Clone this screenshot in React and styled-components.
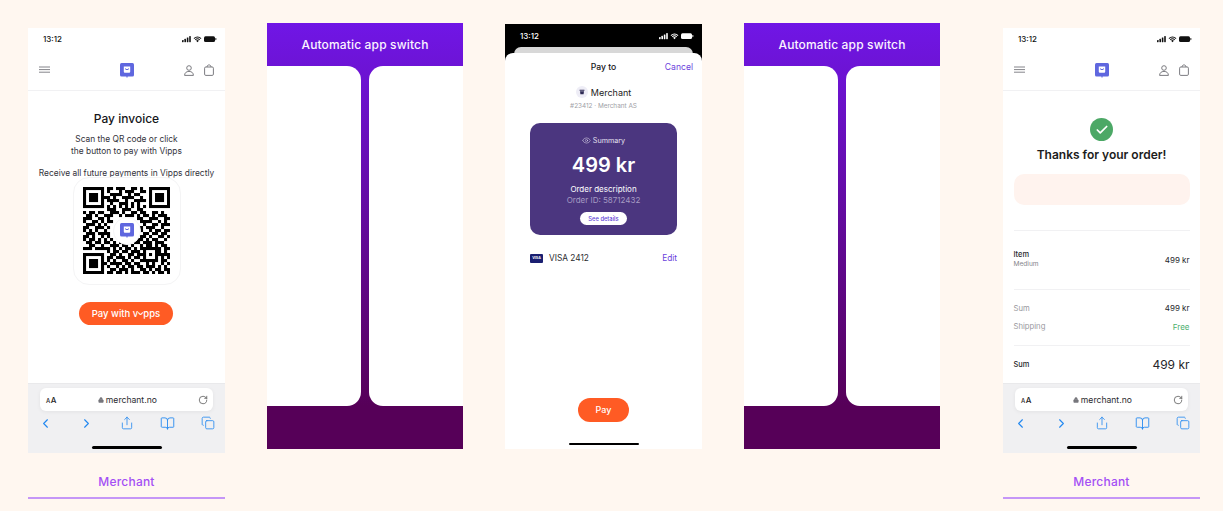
import React from 'react';
import styled, { createGlobalStyle } from 'styled-components';
import { ChevronLeft, ChevronRight, Share, BookOpen, Copy, RotateCw, Lock, Eye, Check } from 'lucide-react';

const GlobalStyle = createGlobalStyle`
  html, body {
    margin: 0;
    background: #fff7f0;
    font-family: "Inter", "Liberation Sans", sans-serif;
    -webkit-font-smoothing: antialiased;
  }
  * { box-sizing: border-box; }
`;

const Page = styled.div`
  display: flex;
  width: 1223px;
  height: 511px;
  overflow: hidden;
  padding-left: 28px;
`;

const Column = styled.div`
  width: ${p => p.$width || 197}px;
  margin-left: ${p => p.$gap || 0}px;
  padding-top: ${p => p.$top}px;
  display: flex;
  flex-direction: column;
  flex: none;
`;

const Caption = styled.div`
  margin-top: 19px;
  height: 27px;
  border-bottom: 2px solid #c596f7;
  text-align: center;
  color: #a44ff5;
  font-size: 12px;
  font-weight: 500;
  line-height: 20px;
  letter-spacing: 0.2px;
`;

const Phone = styled.div`
  width: 197px;
  height: 425px;
  background: ${p => (p.$dark ? '#000' : '#fff')};
  display: flex;
  flex-direction: column;
  position: relative;
  overflow: hidden;
`;

const StatusBar = styled.div`
  height: 22px;
  flex: none;
  display: flex;
  align-items: center;
  justify-content: space-between;
  padding: ${p => (p.$dark ? '2px' : '0')} 8px 0 15px;
  color: ${p => (p.$dark ? '#fff' : '#111')};
  font-size: 8px;
  font-weight: 500;
`;

const NavBar = styled.div`
  height: 41px;
  flex: none;
  display: flex;
  align-items: center;
  justify-content: space-between;
  padding: 0 11px;
  border-bottom: 1px solid #f1f1f3;
`;

const NavSide = styled.div`
  width: 34px;
  display: flex;
  align-items: center;
  justify-content: ${p => (p.$right ? 'flex-end' : 'flex-start')};
  gap: 10px;
`;

const Content = styled.div`
  flex: 1;
  display: flex;
  flex-direction: column;
  align-items: center;
`;

const InvoiceTitle = styled.h1`
  margin: 20px 0 0;
  font-size: 12px;
  line-height: 15px;
  font-weight: 500;
  color: #16161a;
`;

const Para = styled.p`
  margin: ${p => p.$top || 0}px 0 0;
  font-size: 8.4px;
  line-height: 11.5px;
  color: #33333b;
  text-align: center;
  white-space: nowrap;
`;

const QrCard = styled.div`
  margin-top: -3px;
  width: 108px;
  height: 108px;
  flex: none;
  border: 1px solid #f4f4f5;
  border-radius: 16px;
  display: flex;
  align-items: center;
  justify-content: center;
  position: relative;
`;

const QrBadge = styled.div`
  position: absolute;
  left: 50%;
  top: 50%;
  width: 28px;
  height: 28px;
  margin: -14px 0 0 -14px;
  border-radius: 50%;
  background: #fff;
  border: 1px solid #f5f5f7;
  display: flex;
  align-items: center;
  justify-content: center;
`;

const OrangeButton = styled.button`
  margin: ${p => p.$top}px ${p => p.$nudge || 0}px 0 0;
  width: ${p => p.$width}px;
  height: ${p => p.$height}px;
  border: none;
  border-radius: 12px;
  background: #ff5b24;
  color: #fff;
  font-family: inherit;
  font-size: ${p => p.$size}px;
  font-weight: 500;
  display: flex;
  align-items: center;
  justify-content: center;
  padding: 0;
  flex: none;
`;

const Browser = styled.div`
  height: 70px;
  flex: none;
  background: #f0f0f2;
  border-top: 1px solid #e9e9eb;
  padding: 4px 10px 0;
  display: flex;
  flex-direction: column;
  align-items: center;
`;

const UrlBar = styled.div`
  width: 173px;
  height: 23px;
  flex: none;
  background: #fff;
  border-radius: 6px;
  box-shadow: 0 1px 4px rgba(0, 0, 0, 0.06);
  display: flex;
  align-items: center;
  justify-content: space-between;
  padding: 0 5px 0 6px;
  color: #222;
`;

const AaLabel = styled.span`
  font-size: 8px;
  font-weight: 500;
  letter-spacing: 0.4px;
  & > small { font-size: 6px; }
`;

const UrlText = styled.span`
  display: flex;
  align-items: center;
  gap: 2px;
  font-size: 8.6px;
  color: #2a2a2e;
`;

const ToolBar = styled.div`
  width: 100%;
  flex: none;
  margin-top: 4px;
  height: 16px;
  display: flex;
  justify-content: space-between;
  align-items: center;
  color: #2288f0;
`;

const HomeBar = styled.div`
  width: 70px;
  height: 2.5px;
  flex: none;
  margin-top: ${p => p.$top}px;
  border-radius: 2px;
  background: #000;
  align-self: center;
`;

/* switch panels */
const SwitchPanel = styled.div`
  width: 196px;
  height: 426px;
  display: flex;
  flex-direction: column;
  background: linear-gradient(180deg, #7016e6 0%, #560058 90%, #560058 100%);
`;

const SwitchHeader = styled.div`
  height: 43px;
  flex: none;
  display: flex;
  align-items: center;
  justify-content: center;
  color: #fbf5ff;
  font-size: 12px;
  font-weight: 500;
  letter-spacing: 0.15px;
`;

const SwitchCards = styled.div`
  height: 340px;
  flex: none;
  display: flex;
  gap: 8px;
`;

const SwitchCard = styled.div`
  flex: 1;
  background: #fff;
  border-radius: ${p => (p.$side === 'left' ? '0 14px 14px 0' : '14px 0 0 14px')};
`;

/* pay sheet */
const SheetStack = styled.div`
  flex: 1;
  display: flex;
  flex-direction: column;
  position: relative;
  padding-top: 7px;
`;

const SheetBehind = styled.div`
  position: absolute;
  top: 1px;
  left: 9px;
  right: 9px;
  height: 20px;
  border-radius: 7px 7px 0 0;
  background: #d8d8d8;
`;

const Sheet = styled.div`
  flex: 1;
  position: relative;
  background: #fff;
  border-radius: 8px 8px 0 0;
  display: flex;
  flex-direction: column;
  align-items: center;
  padding: 0 9px 4px;
`;

const SheetHead = styled.div`
  width: 100%;
  height: 28px;
  flex: none;
  display: grid;
  grid-template-columns: 1fr auto 1fr;
  align-items: center;
  font-size: 8.6px;
`;

const SheetTitle = styled.span`
  grid-column: 2;
  font-weight: 500;
  color: #16161a;
`;

const LinkText = styled.span`
  justify-self: end;
  color: #6a3fdc;
  font-size: ${p => p.$size || 8.6}px;
`;

const MerchantRow = styled.div`
  margin-top: 5px;
  display: flex;
  align-items: center;
  gap: 3px;
  font-size: 9px;
  color: #222;
`;

const MerchantAvatar = styled.span`
  width: 12px;
  height: 12px;
  border-radius: 50%;
  background: #eeedf6;
  display: flex;
  align-items: center;
  justify-content: center;
`;

const MerchantSub = styled.div`
  margin-top: 4px;
  font-size: 6.4px;
  line-height: 8px;
  color: #a0a0a6;
`;

const SummaryCard = styled.div`
  margin-top: 13px;
  width: 147px;
  height: 112px;
  flex: none;
  border-radius: 10px;
  background: #4b367f;
  color: #fff;
  display: flex;
  flex-direction: column;
  align-items: center;
`;

const SummaryLabel = styled.div`
  margin-top: 13px;
  display: flex;
  align-items: center;
  gap: 2px;
  font-size: 7.2px;
  color: #e6e2f0;
`;

const SummaryAmount = styled.div`
  margin-top: 7px;
  font-size: 20px;
  line-height: 26px;
  font-weight: 600;
`;

const SummaryDesc = styled.div`
  margin-top: 6px;
  font-size: 8px;
  line-height: 11px;
`;

const SummaryOrder = styled.div`
  font-size: 8px;
  line-height: 11px;
  color: #a69bc3;
`;

const DetailsPill = styled.span`
  margin-top: 6px;
  width: 47px;
  height: 13px;
  border-radius: 7px;
  background: #fff;
  color: #5f3fd6;
  font-size: 5.8px;
  font-weight: 500;
  display: flex;
  align-items: center;
  justify-content: center;
`;

const CardRow = styled.div`
  margin-top: 18px;
  width: 147px;
  display: flex;
  align-items: center;
  justify-content: space-between;
  font-size: 8.3px;
  color: #2a2a2e;
`;

const CardName = styled.span`
  display: flex;
  align-items: center;
  gap: 6px;
`;

const VisaChip = styled.span`
  width: 13px;
  height: 9px;
  border-radius: 1px;
  background: #1a1f71;
  color: #fff;
  font-size: 3.6px;
  font-weight: 700;
  display: flex;
  align-items: center;
  justify-content: center;
`;

const Spacer = styled.div`
  flex: 1;
`;

/* receipt */
const CheckCircle = styled.div`
  margin-top: 27px;
  width: 23px;
  height: 23px;
  flex: none;
  border-radius: 50%;
  background: #4ca866;
  display: flex;
  align-items: center;
  justify-content: center;
`;

const ThanksTitle = styled.h2`
  margin: 6px 0 0;
  font-size: 12px;
  line-height: 16px;
  font-weight: 600;
  color: #1c1c20;
`;

const PinkBox = styled.div`
  margin-top: 11px;
  width: 176px;
  height: 31px;
  flex: none;
  border-radius: 10px;
  background: #fff3ee;
`;

const ReceiptRow = styled.div`
  width: 176px;
  height: ${p => p.$height}px;
  flex: none;
  margin-top: ${p => p.$top || 0}px;
  padding-top: ${p => p.$pad || 0}px;
  display: flex;
  align-items: center;
  justify-content: space-between;
  border-top: ${p => (p.$line ? '1px solid #f1f1f3' : 'none')};
`;

const ItemName = styled.div`
  font-size: 7.4px;
  line-height: 9.5px;
  color: #26262a;
  font-weight: 500;
  margin-top: -1px;
  & > small {
    display: block;
    font-size: 6.6px;
    line-height: 9px;
    color: #85858b;
    font-weight: 400;
  }
`;

const RowLabel = styled.span`
  font-size: ${p => p.$size || 7.7}px;
  font-weight: ${p => p.$weight || 400};
  color: ${p => p.$color || '#9a9aa0'};
`;

const RowValue = styled.span`
  font-size: ${p => p.$size || 8}px;
  font-weight: ${p => p.$weight || 400};
  color: ${p => p.$color || '#26262a'};
`;

const QR_ROWS = [
  '11111110110111001101001111111',
  '10000010100010111001101000001',
  '10111010011110010110001011101',
  '10111011101001111001001011101',
  '10111010111100100111101011101',
  '10000010010011101010001000001',
  '11111110101010101010101111111',
  '00000000111001110011000000000',
  '10110110011101001101100110100',
  '01101001110010111010110101110',
  '11100110100000000011001110011',
  '10011010110000000001111001010',
  '01110101000000000000100110111',
  '11001110100000000001011100100',
  '10101001000000000001001011011',
  '01110111100000000000110110110',
  '11010010100000000001101001101',
  '10110101010000000011010110010',
  '01101101101011010110111011100',
  '00110010011101101001011010110',
  '11101111101010110101111111011',
  '00000000101101101110100011010',
  '11111110011010011011101011111',
  '10000010110111010110100010101',
  '10111010101001101001111110110',
  '10111011011110110110010100101',
  '10111010100101011011011101010',
  '10000010011011101001101011011',
  '11111110110110101110110101101',
];

const QrCode = () => (
  <svg width="87" height="87" viewBox="0 0 29 29" fill="#000">
    {QR_ROWS.map((row, y) =>
      row.split('').map((c, x) => (c === '1' ? <rect key={x + '-' + y} x={x} y={y} width="1.02" height="1.02" /> : null))
    )}
  </svg>
);

const Logo = ({ size = 14 }) => (
  <svg width={size} height={size + 1} viewBox="0 0 14 15">
    <rect width="14" height="13.5" rx="1.5" fill="#5f67df" />
    <path d="M6 13.3h2L7 15z" fill="#5f67df" />
    <path d="M3.8 3.6h6.4v5.2q0 1-1 1H4.8q-1 0-1-1z" fill="#fff" />
    <path d="M5.3 6q1.7 1.8 3.4 0" fill="none" stroke="#5f67df" strokeWidth="1" strokeLinecap="round" />
  </svg>
);

const StatusIcons = ({ color }) => (
  <svg width="35" height="8" viewBox="0 0 35 8" fill={color}>
    <rect x="0" y="5" width="1.6" height="2.2" rx=".4" />
    <rect x="2.4" y="3.8" width="1.6" height="3.4" rx=".4" />
    <rect x="4.8" y="2.4" width="1.6" height="4.8" rx=".4" />
    <rect x="7.2" y="1" width="1.6" height="6.2" rx=".4" />
    <path d="M15.5 7.2l-1.4-1.5a2 2 0 0 1 2.8 0zM12.9 4.5a3.7 3.7 0 0 1 5.2 0l-.7.7a2.8 2.8 0 0 0-3.8 0zM11.6 3.2a5.6 5.6 0 0 1 7.8 0l-.7.7a4.6 4.6 0 0 0-6.4 0z" />
    <rect x="22" y="1.2" width="11" height="5.8" rx="1.5" />
    <rect x="33.4" y="3" width=".9" height="2.2" rx=".4" />
  </svg>
);

const MenuIcon = () => (
  <svg width="11" height="8" viewBox="0 0 11 8" stroke="#77777d" strokeWidth="0.9">
    <path d="M0 1h11M0 3.6h11M0 6.2h11" />
  </svg>
);

const UserIcon = () => (
  <svg width="10" height="11" viewBox="0 0 10 11" fill="none" stroke="#6d6d73" strokeWidth="0.9">
    <circle cx="5" cy="3" r="2.3" />
    <path d="M.6 10.4h8.8c0-2.4-1.6-4-4.4-4s-4.4 1.6-4.4 4z" />
  </svg>
);

const BagIcon = () => (
  <svg width="10" height="12" viewBox="0 0 10 12" fill="none" stroke="#6d6d73" strokeWidth="0.9">
    <rect x=".6" y="3" width="8.8" height="8.4" rx="1.2" />
    <path d="M3 3c0-2.8 4-2.8 4 0" />
  </svg>
);

const Smile = () => (
  <svg width="5" height="8" viewBox="0 0 5 8" fill="none" stroke="#fff" strokeWidth="1.2" strokeLinecap="round">
    <path d="M.6 3.8q1.9 3.2 3.8 0" />
  </svg>
);

const CupIcon = () => (
  <svg width="6" height="6" viewBox="0 0 6 6" fill="#2f2b55">
    <path d="M.6.8h4.8v.9H.6zM1 2.3h4l-.4 2.9H1.4z" />
  </svg>
);

const NavRow = () => (
  <NavBar>
    <NavSide><MenuIcon /></NavSide>
    <Logo />
    <NavSide $right><UserIcon /><BagIcon /></NavSide>
  </NavBar>
);

const SafariBar = () => (
  <Browser>
    <UrlBar>
      <AaLabel><small>A</small>A</AaLabel>
      <UrlText><Lock size={6} fill="#77777d" color="#77777d" />merchant.no</UrlText>
      <RotateCw size={10} strokeWidth={1.4} color="#222" />
    </UrlBar>
    <ToolBar>
      <ChevronLeft size={15} strokeWidth={1.8} />
      <ChevronRight size={15} strokeWidth={1.8} />
      <Share size={14} strokeWidth={1.4} />
      <BookOpen size={15} strokeWidth={1.4} />
      <Copy size={14} strokeWidth={1.4} />
    </ToolBar>
    <HomeBar $top={15} />
  </Browser>
);

const AppSwitch = () => (
  <SwitchPanel>
    <SwitchHeader>Automatic app switch</SwitchHeader>
    <SwitchCards>
      <SwitchCard $side="left" />
      <SwitchCard $side="right" />
    </SwitchCards>
  </SwitchPanel>
);

export default function App() {
  return (
    <Page>
      <GlobalStyle />

      <Column $top={28}>
        <Phone>
          <StatusBar><span>13:12</span><StatusIcons color="#111" /></StatusBar>
          <NavRow />
          <Content>
            <InvoiceTitle>Pay invoice</InvoiceTitle>
            <Para $top={8}>Scan the QR code or click<br />the button to pay with Vipps</Para>
            <Para $top={11}>Receive all future payments in Vipps directly</Para>
            <QrCard>
              <QrCode />
              <QrBadge><Logo size={14} /></QrBadge>
            </QrCard>
            <OrangeButton $top={17} $nudge={1} $width={94} $height={23} $size={9.5}>
              Pay with v<Smile />pps
            </OrangeButton>
          </Content>
          <SafariBar />
        </Phone>
        <Caption>Merchant</Caption>
      </Column>

      <Column $top={23} $gap={42} $width={196}>
        <AppSwitch />
      </Column>

      <Column $top={24} $gap={42}>
        <Phone $dark>
          <StatusBar $dark><span>13:12</span><StatusIcons color="#fff" /></StatusBar>
          <SheetStack>
            <SheetBehind />
            <Sheet>
              <SheetHead>
                <SheetTitle>Pay to</SheetTitle>
                <LinkText>Cancel</LinkText>
              </SheetHead>
              <MerchantRow><MerchantAvatar><CupIcon /></MerchantAvatar>Merchant</MerchantRow>
              <MerchantSub>#23412 · Merchant AS</MerchantSub>
              <SummaryCard>
                <SummaryLabel><Eye size={9} strokeWidth={1.3} /> Summary</SummaryLabel>
                <SummaryAmount>499 kr</SummaryAmount>
                <SummaryDesc>Order description</SummaryDesc>
                <SummaryOrder>Order ID: 58712432</SummaryOrder>
                <DetailsPill>See details</DetailsPill>
              </SummaryCard>
              <CardRow>
                <CardName><VisaChip>VISA</VisaChip>VISA 2412</CardName>
                <LinkText $size={8.3}>Edit</LinkText>
              </CardRow>
              <Spacer />
              <OrangeButton $top={0} $width={51} $height={24} $size={9}>Pay</OrangeButton>
              <HomeBar $top={21} />
            </Sheet>
          </SheetStack>
        </Phone>
      </Column>

      <Column $top={23} $gap={42} $width={196}>
        <AppSwitch />
      </Column>

      <Column $top={28} $gap={63}>
        <Phone>
          <StatusBar><span>13:12</span><StatusIcons color="#111" /></StatusBar>
          <NavRow />
          <Content>
            <CheckCircle><Check size={14} color="#fff" strokeWidth={3} /></CheckCircle>
            <ThanksTitle>Thanks for your order!</ThanksTitle>
            <PinkBox />
            <ReceiptRow $top={25} $height={59} $line>
              <ItemName>Item<small>Medium</small></ItemName>
              <RowValue>499 kr</RowValue>
            </ReceiptRow>
            <ReceiptRow $height={28} $pad={9} $line>
              <RowLabel>Sum</RowLabel>
              <RowValue>499 kr</RowValue>
            </ReceiptRow>
            <ReceiptRow $height={19}>
              <RowLabel>Shipping</RowLabel>
              <RowValue $color="#4caf6d">Free</RowValue>
            </ReceiptRow>
            <ReceiptRow $top={9} $height={38} $line>
              <RowLabel $size={7.4} $color="#26262a" $weight={500}>Sum</RowLabel>
              <RowValue $size={12}>499 kr</RowValue>
            </ReceiptRow>
          </Content>
          <SafariBar />
        </Phone>
        <Caption>Merchant</Caption>
      </Column>
    </Page>
  );
}
